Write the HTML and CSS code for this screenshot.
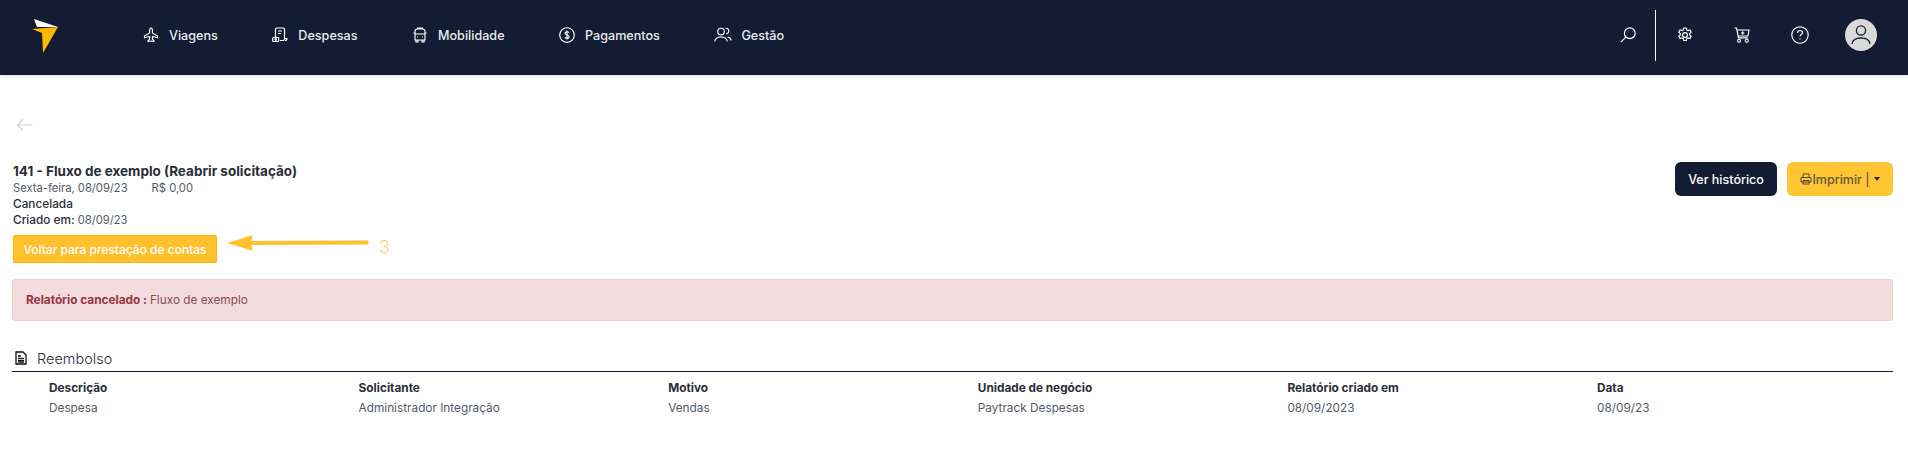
FILE: index.html
```html
<!DOCTYPE html>
<html>
  <head>
    <title>Reembolso</title>
    <link rel="stylesheet" href="styles.css">
  </head>
  <body>
    <header class="topbar">
      <svg class="logo" viewBox="0 0 27 35" width="27" height="35">
        <polygon fill="#fff" points="2,0 26,8 5,8"/>
        <polygon fill="#ffb800" points="0,10 26,8 11,34 10,14"/>
      </svg>
      <nav class="nav">
        <a class="nav-item">
          <svg class="icon" viewBox="0 0 16 16"><path d="M8 1c1 0 1.400 1.400 1.400 2.600V6l5.100 3v1.700l-5.100-1.200v2.700l1.500 1.300v1L8 14l-2.900.5v-1l1.500-1.300V9.500L1.500 10.700V9l5.100-3V3.600C6.600 2.400 7 1 8 1z"/></svg>
          Viagens
        </a>
        <a class="nav-item">
          <svg class="icon" viewBox="0 0 16 16"><path d="M3.500 10V2.500a1.500 1.500 0 0 1 1.500-1.500h6a1.500 1.500 0 0 1 1.500 1.500v9.500a1.500 1.500 0 0 1-1.500 1.500H8M6 4h4M6 6.500h3M12.500 11.500h2.500c0 1.300-.7 2-2 2"/><rect x="0.700" y="10.500" width="6" height="4" rx="0.700"/><circle cx="3.700" cy="12.500" r="0.800"/></svg>
          Despesas
        </a>
        <a class="nav-item">
          <svg class="icon" viewBox="0 0 16 16"><path d="M5 1h6M3 13V4.500A2.500 2.500 0 0 1 5.500 2h5A2.500 2.500 0 0 1 13 4.500V13zM3 7h10M3 6H1.500M13 6h1.500M4 13v2h2v-2M10 13v2h2v-2M5 10h1M10 10h1"/></svg>
          Mobilidade
        </a>
        <a class="nav-item">
          <svg class="icon" viewBox="0 0 16 16"><circle cx="8" cy="8" r="7.300"/><path d="M10 5.800C9.700 5 9 4.700 8 4.700c-1.200 0-2 .6-2 1.600 0 2.200 4.100 1.200 4.100 3.400 0 1-.9 1.600-2.100 1.600-1 0-1.800-.4-2.100-1.200M8 3.400v9.200"/></svg>
          Pagamentos
        </a>
        <a class="nav-item nav-item-wide">
          <svg class="icon icon-wide" viewBox="0 0 18 16"><circle cx="7" cy="4.500" r="3.300"/><path d="M.7 14.500c.5-3 3-4.500 6.300-4.500s5.800 1.500 6.300 4.500M11.500 1.300c2-.4 3.300 1 3.300 2.700 0 1.400-1 2.600-2.400 2.900M13.500 10c2 .4 3.300 1.600 3.800 3.500"/></svg>
          Gestão
        </a>
      </nav>
      <div class="tools">
        <svg class="icon tool-search" viewBox="0 0 16 16"><circle cx="9.800" cy="6.200" r="5.400"/><path d="M5.900 10.100L.8 15.200"/></svg>
        <span class="tools-divider"></span>
        <svg class="icon tool" viewBox="0 0 16 16"><circle cx="8" cy="8" r="2.400"/><path d="M6.700 1h2.600l.4 1.900 1.300.7 1.900-.6 1.300 2.200-1.500 1.300v1.500l1.500 1.300-1.300 2.200-1.900-.6-1.300.7-.4 1.900H6.700l-.4-1.900-1.300-.7-1.900.6-1.300-2.200 1.500-1.300V6.500L1.800 5.200 3.100 3l1.900.6 1.300-.7z"/></svg>
        <svg class="icon tool" viewBox="0 0 16 16"><path d="M.5 1h2l2 9.800h9.500M3 3h12l-1 6H4.200M8.700 4.300v3.400M7 6h3.400"/><circle cx="5" cy="13.700" r="1.500"/><circle cx="12.800" cy="13.700" r="1.500"/></svg>
        <svg class="icon tool tool-help" viewBox="0 0 18 18"><circle cx="9" cy="9" r="8.200"/><path d="M6.500 7c0-1.500 1.100-2.500 2.600-2.500 1.400 0 2.400.9 2.400 2.100 0 1.800-2.500 2-2.500 3.900M9 12.400v1.200"/></svg>
        <span class="avatar">
          <svg viewBox="0 0 32 32" width="32" height="32"><circle cx="16" cy="11.500" r="4.600"/><path d="M7 25c.5-3.800 4-6 9-6s8.500 2.200 9 6"/></svg>
        </span>
      </div>
    </header>

    <main class="page">
      <svg class="back" viewBox="0 0 16 12" width="17" height="12"><path d="M16 6H1M6.500.5L1 6l5.500 5.500"/></svg>

      <div class="summary">
        <div class="info">
          <h1 class="title">141 - Fluxo de exemplo (Reabrir solicitação)</h1>
          <p class="line line-muted"><span class="date">Sexta-feira, 08/09/23</span>R$ 0,00</p>
          <p class="line line-strong">Cancelada</p>
          <p class="line"><span class="line-strong">Criado em:</span> <span class="line-muted">08/09/23</span></p>
          <div class="reopen">
            <button class="btn-reopen" type="button">Voltar para prestação de contas</button>
            <svg class="callout-arrow" viewBox="0 0 146 18" width="143" height="18"><polygon points="0,8 26,0 25,6 144,5.500 145,8 143,9.500 25,10 26,16"/></svg>
            <span class="callout-num">3</span>
          </div>
        </div>
        <div class="actions">
          <button class="btn-dark" type="button">Ver histórico</button>
          <button class="btn-print" type="button">
            <svg class="print-icon" viewBox="0 0 12 12" width="12" height="12"><path d="M3 4V1h6v3M1 4.500h10v4.500H1zM3 7.500h6V11H3z"/></svg>Imprimir |<span class="caret"></span>
          </button>
        </div>
      </div>

      <div class="alert"><b>Relatório cancelado :</b> Fluxo de exemplo</div>

      <section class="report">
        <h2 class="report-title">
          <svg viewBox="0 0 12 14" width="12" height="14"><path d="M1 1h7l3 3v9H1z"/><path d="M3 5h3M3 7.300h6M3 9.300h6M3 11h6"/></svg>
          Reembolso
        </h2>
        <div class="grid">
          <div class="head">Descrição</div>
          <div class="head">Solicitante</div>
          <div class="head">Motivo</div>
          <div class="head">Unidade de negócio</div>
          <div class="head">Relatório criado em</div>
          <div class="head">Data</div>
          <div>Despesa</div>
          <div>Administrador Integração</div>
          <div>Vendas</div>
          <div>Paytrack Despesas</div>
          <div>08/09/2023</div>
          <div>08/09/23</div>
        </div>
      </section>
    </main>
  </body>
</html>
```

FILE: styles.css
```css
html, body {
  height: 100%;
  overflow: hidden;
}
body {
  margin: 0;
  background-color: #fefefe;
  font-family: Inter, "Noto Sans", sans-serif;
  font-size: 11px;
  color: #3a3f4a;
}

h1, h2, p {
  margin: 0;
}

.topbar {
  height: 75px;
  box-sizing: border-box;
  padding-bottom: 5px;
  display: flex;
  align-items: center;
  background-color: #131c32;
  box-shadow: 0 2px 3px #e8e8ea;
  color: #e9ebef;
}

.logo {
  margin: 2px 0 0 32px;
  flex: none;
}

.nav {
  display: flex;
  gap: 54.5px;
  margin-left: 84px;
}

.nav-item {
  display: flex;
  align-items: center;
  gap: 10px;
  font-size: 12.6px;
  font-weight: 500;
}

.nav-item-wide {
  gap: 9px;
}

.icon {
  width: 16px;
  height: 16px;
  fill: none;
  stroke: #fff;
  stroke-width: 1.150;
}

.icon-wide {
  width: 18px;
}

.tools {
  margin-left: auto;
  display: flex;
  align-items: center;
  padding-right: 31px;
}

.tool-search {
  margin-right: 19px;
}

.tools-divider {
  width: 1px;
  height: 51px;
  background-color: #fff;
  margin-right: 21px;
}

.tool {
  margin-right: 41px;
}

.tool-help {
  width: 18px;
  height: 18px;
  margin-right: 36px;
}

.avatar {
  width: 32px;
  height: 32px;
  border-radius: 50%;
  background-color: #d9d9d9;
  display: block;
}

.avatar svg {
  fill: none;
  stroke: #131c32;
  stroke-width: 1.3;
}

.page {
  padding: 44px 15px 0 13px;
}

.back {
  display: block;
  margin-left: 3px;
  fill: none;
  stroke: #cfd0d4;
  stroke-width: 1.2;
}

.summary {
  display: flex;
  justify-content: space-between;
  margin-top: 31px;
}

.title {
  font-size: 13.5px;
  font-weight: 700;
  line-height: 18px;
  color: #2a2e38;
}

.line {
  font-size: 11.2px;
  line-height: 16px;
  color: #2a2e38;
}

.line-muted {
  color: #555a66;
}

.line-strong {
  font-size: 11.8px;
  font-weight: 500;
}

.date {
  margin-right: 24px;
}

.reopen {
  display: flex;
  align-items: center;
  margin-top: 7px;
  position: relative;
}

.btn-reopen {
  height: 28px;
  width: 204px;
  padding: 0;
  background-color: #ffc02e;
  border: 1px solid #ffb800;
  border-radius: 2px;
  color: #fff;
  font: 500 12px Inter, sans-serif;
}

.callout-arrow {
  position: absolute;
  left: 214px;
  top: 0;
  fill: #ffc02e;
}

.callout-num {
  position: absolute;
  left: 366px;
  top: 1px;
  color: #ffc02e;
  font-size: 18px;
  font-weight: 200;
}

.actions {
  display: flex;
  gap: 10px;
}

.btn-dark, .btn-print {
  height: 34px;
  border: none;
  border-radius: 6px;
  font: 500 12.5px Inter, sans-serif;
}

.btn-dark {
  width: 102px;
  background-color: #131c32;
  color: #fff;
}

.btn-print {
  width: 106px;
  background-color: #ffc535;
  color: #5f5a3c;
  display: flex;
  align-items: center;
  justify-content: center;
}

.print-icon {
  fill: none;
  stroke: #4a4a3c;
  stroke-width: 1;
}

.caret {
  border: 3px solid transparent;
  border-top: 4px solid #2b2b2b;
  border-bottom: none;
  margin-left: 4px;
}

.alert {
  margin: 16px 0 0 -1px;
  height: 42px;
  display: flex;
  align-items: center;
  gap: 3px;
  padding-left: 13px;
  background-color: #f3dcde;
  border: 1px solid #efcdd1;
  border-radius: 3px;
  font-size: 11.8px;
  color: #8c4a52;
  box-sizing: border-box;
}

.alert b {
  color: #99343f;
  font-weight: 700;
}

.report {
  margin: 24px 0 0 -1px;
}

.report-title {
  display: flex;
  align-items: center;
  gap: 10px;
  height: 26px;
  padding-left: 3px;
  border-bottom: 1px solid #131c32;
  font-size: 14.5px;
  font-weight: 300;
  color: #2a2e38;
}

.report-title svg {
  fill: none;
  stroke: #111;
  stroke-width: 1.3;
}

.grid {
  display: grid;
  grid-template-columns: repeat(6, 309.6px);
  grid-auto-rows: 20px;
  align-items: center;
  font-size: 11.8px;
  padding: 6px 0 0 37px;
  color: #555a66;
}

.head {
  font-weight: 700;
  color: #2a2e38;
}
```
